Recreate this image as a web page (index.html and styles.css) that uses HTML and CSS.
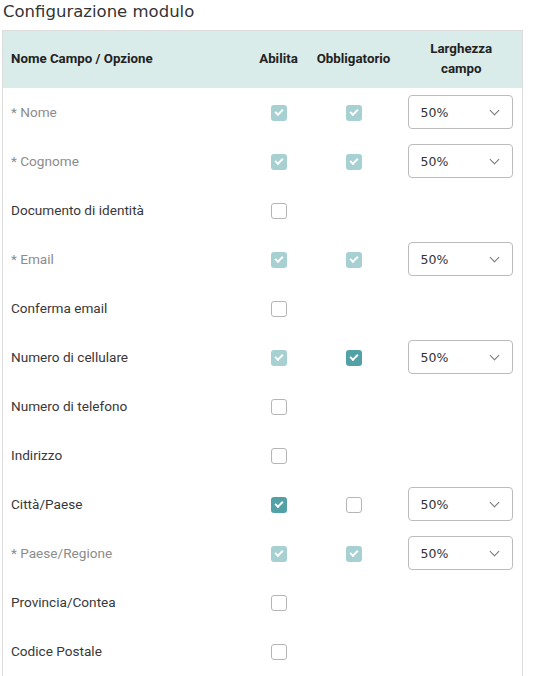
FILE: index.html
```html
<!DOCTYPE html>
<html>
<head>
<meta charset="utf-8">
<link rel="stylesheet" href="styles.css">
</head>
<body>
<div class="page">
  <h2 class="title">Configurazione modulo</h2>
  <table class="cfg">
    <colgroup>
      <col class="c-name"><col class="c-en"><col class="c-req"><col class="c-w">
    </colgroup>
    <thead>
      <tr>
        <th class="left">Nome Campo / Opzione</th>
        <th>Abilita</th>
        <th>Obbligatorio</th>
        <th>Larghezza<br>campo</th>
      </tr>
    </thead>
    <tbody>
      <tr><td class="lbl dis">* Nome</td><td><span class="cb dchk"></span></td><td><span class="cb dchk"></span></td><td><div class="sel">50%<span class="chev"></span></div></td></tr>
      <tr><td class="lbl dis">* Cognome</td><td><span class="cb dchk"></span></td><td><span class="cb dchk"></span></td><td><div class="sel">50%<span class="chev"></span></div></td></tr>
      <tr><td class="lbl">Documento di identità</td><td><span class="cb"></span></td><td></td><td></td></tr>
      <tr><td class="lbl dis">* Email</td><td><span class="cb dchk"></span></td><td><span class="cb dchk"></span></td><td><div class="sel">50%<span class="chev"></span></div></td></tr>
      <tr><td class="lbl">Conferma email</td><td><span class="cb"></span></td><td></td><td></td></tr>
      <tr><td class="lbl">Numero di cellulare</td><td><span class="cb dchk"></span></td><td><span class="cb chk"></span></td><td><div class="sel">50%<span class="chev"></span></div></td></tr>
      <tr><td class="lbl">Numero di telefono</td><td><span class="cb"></span></td><td></td><td></td></tr>
      <tr><td class="lbl">Indirizzo</td><td><span class="cb"></span></td><td></td><td></td></tr>
      <tr><td class="lbl">Città/Paese</td><td><span class="cb chk"></span></td><td><span class="cb"></span></td><td><div class="sel">50%<span class="chev"></span></div></td></tr>
      <tr><td class="lbl dis">* Paese/Regione</td><td><span class="cb dchk"></span></td><td><span class="cb dchk"></span></td><td><div class="sel">50%<span class="chev"></span></div></td></tr>
      <tr><td class="lbl">Provincia/Contea</td><td><span class="cb"></span></td><td></td><td></td></tr>
      <tr class="last"><td class="lbl">Codice Postale</td><td><span class="cb"></span></td><td></td><td></td></tr>
    </tbody>
  </table>
</div>
</body>
</html>
```

FILE: styles.css
```css
html, body {
  margin: 0;
  padding: 0;
  background: #fff;
}
.page {
  padding: 0 0 0 2px;
  font-family: Roboto, "Liberation Sans", sans-serif;
  color: #333;
}
.title {
  margin: 0;
  padding: 2px 0 0 1px;
  height: 28px;
  font-family: "DejaVu Sans", sans-serif;
  font-weight: normal;
  font-size: 16.5px;
  line-height: 20px;
  color: #333;
}
.cfg {
  width: 520px;
  border-collapse: collapse;
  table-layout: fixed;
  border: 1px solid #dcdcdc;
}
.c-name { width: 248px; }
.c-en { width: 56px; }
.c-req { width: 94px; }
.c-w { width: 122px; }
.cfg thead tr {
  background: #d9ecea;
  height: 57px;
}
.cfg th {
  font-size: 13.3px;
  font-weight: bold;
  color: #222;
  text-align: center;
  line-height: 20px;
  padding: 0;
  vertical-align: middle;
}
.cfg th.left {
  text-align: left;
  padding-left: 8px;
}
.cfg tbody tr {
  height: 49px;
}
.cfg tbody tr.last {
  height: 69px;
}
.cfg td {
  padding: 0;
  text-align: center;
  vertical-align: middle;
}
.cfg tbody tr.last td {
  padding-bottom: 20px;
}
.cfg td.lbl {
  text-align: left;
  padding-left: 8px;
  font-size: 13.6px;
  color: #383838;
}
.cfg td.lbl.dis {
  color: #8c8c8c;
}
.cb {
  display: inline-block;
  box-sizing: border-box;
  width: 16px;
  height: 16px;
  border: 1px solid #b5b5b5;
  border-radius: 3px;
  background: #fff;
  vertical-align: middle;
  position: relative;
}
.cb.chk, .cb.dchk {
  border: none;
  background: #51a1a6;
}
.cb.dchk {
  background: #a7d0d3;
}
.cb.chk::after, .cb.dchk::after {
  content: "";
  position: absolute;
  left: 5px;
  top: 3px;
  width: 6px;
  height: 3px;
  border-left: 2px solid #fff;
  border-bottom: 2px solid #fff;
  transform: translate(-1px, 1px) rotate(-45deg);
  transform-origin: center;
}
.sel {
  box-sizing: border-box;
  width: 105px;
  height: 34px;
  margin-left: 7px;
  border: 1px solid #bcbcbc;
  border-radius: 4px;
  display: flex;
  align-items: center;
  justify-content: space-between;
  padding: 0 14px 0 12px;
  font-family: "DejaVu Sans", sans-serif;
  font-size: 12.5px;
  color: #333;
}
.chev {
  width: 6px;
  height: 6px;
  border-right: 1px solid #777;
  border-bottom: 1px solid #777;
  transform: translateY(-2px) rotate(45deg);
}
```
